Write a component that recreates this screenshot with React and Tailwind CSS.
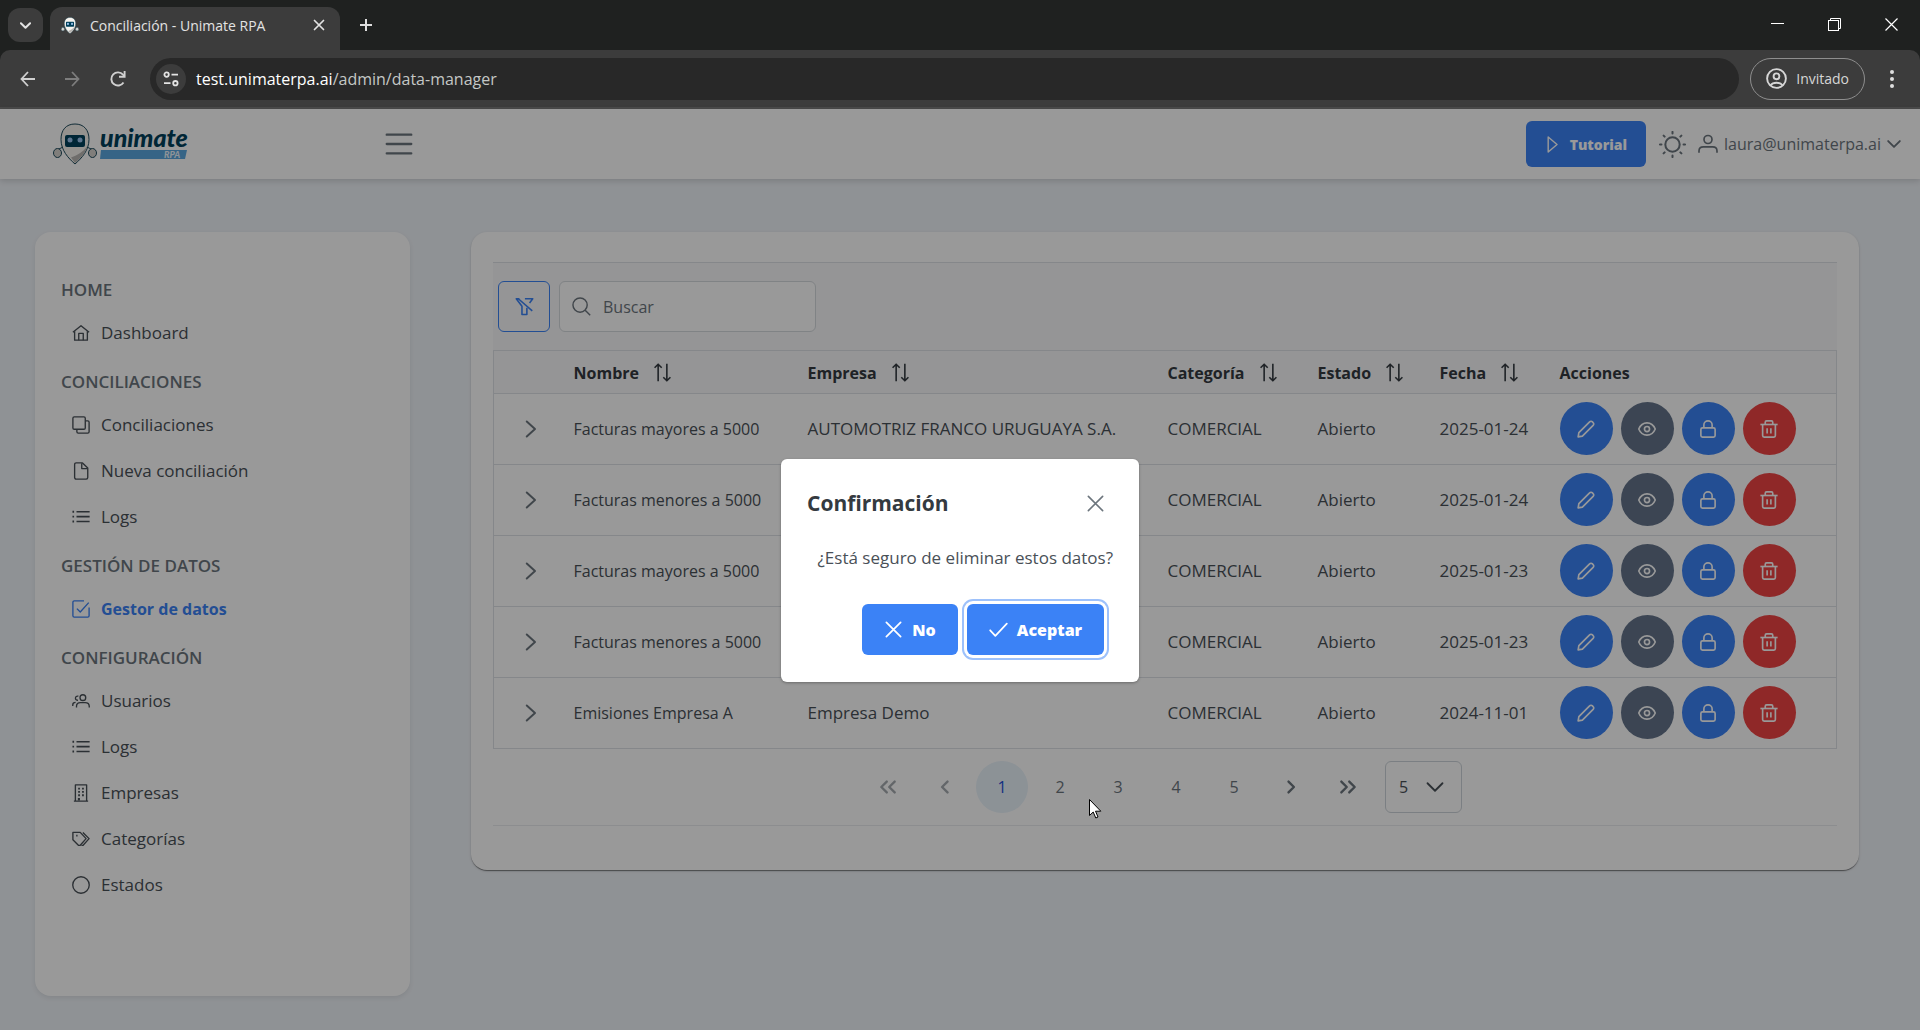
import React from "react";

const ICONS = {
  home: (
    <>
      <path d="M1.2 11 12 2.2 22.8 11" />
      <path d="M3.5 9.5V21.5H20.5V9.5" />
      <path d="M9 21.5V12.5H15V21.5" />
    </>
  ),
  clone: (
    <>
      <rect x="1.2" y="1.2" width="16.5" height="16.5" rx="1.8" />
      <path d="M18 6.5H21A1.8 1.8 0 0 1 22.8 8.3V21A1.8 1.8 0 0 1 21 22.8H8.3A1.8 1.8 0 0 1 6.5 21V18" />
    </>
  ),
  file: (
    <>
      <path d="M5.5 1.2H14L21 8V20.8A2 2 0 0 1 19 22.8H5.5A2 2 0 0 1 3.5 20.8V3.2A2 2 0 0 1 5.5 1.2Z" />
      <path d="M13 1.5V8.8H20.5" />
    </>
  ),
  list: (
    <>
      <path d="M6 5H23.5M6 11.5H23.5M6 18H23.5" strokeWidth="2.3" />
      <path d="M.6 5H2.8M.6 11.5H2.8M.6 18H2.8" strokeWidth="2.6" />
    </>
  ),
  check: (
    <>
      <path d="M16 1.2H3A1.8 1.8 0 0 0 1.2 3V21A1.8 1.8 0 0 0 3 22.8H21A1.8 1.8 0 0 0 22.8 21V10" />
      <path d="M6.5 11.5 11 16 22.3 3.5" />
    </>
  ),
  users: (
    <>
      <circle cx="14.5" cy="7.5" r="3.8" />
      <path d="M6 20.5V19C6 16 8 14.2 11 14.2H17.5C20.8 14.2 23 16 23 19V20.5" />
      <path d="M8.5 5.6C6.2 5 4.6 6.4 4.6 8.2S6 11.2 8 11" />
      <path d="M1 18.5V17.2C1 15 2.4 13.8 4.8 13.8" />
    </>
  ),
  building: (
    <>
      <path d="M4.5 22.8V1.2H19.5V22.8M2.5 22.8H21.5" />
      <path
        d="M8.2 6.2H10.6M13.4 6.2H15.8M8.2 10.6H10.6M13.4 10.6H15.8M8.2 15H10.6M13.4 15H15.8"
        strokeWidth="2.4"
      />
      <path d="M9.2 22V18.6" strokeWidth="2.8" />
    </>
  ),
  tags: (
    <>
      <path d="M1.2 3.2H11L18.8 11.5 11 20.4H8.5L1.2 13Z" />
      <path d="M14.5 3.2 22.8 11.5 14.8 20.4H12.5" />
      <path d="M5.6 7.6H7.4" strokeWidth="2.4" />
    </>
  ),
  circle: <circle cx="12" cy="12" r="11" />,
  search: (
    <>
      <circle cx="10.2" cy="10.2" r="9" />
      <path d="M16.6 16.6 23 23" />
    </>
  ),
  filterSlash: (
    <>
      <path d="M5.5 2.2H1.6L8.8 11.8V22H15V13.5" />
      <path d="M12.5 2.2H22.4L18.4 7.5" />
      <path d="M4.2 2.2 21.8 17.5" />
    </>
  ),
  sort: (
    <>
      <path d="M6.5 23V1.5M2 6 6.500 1.500 11 6" />
      <path d="M17.500 1V22.500M13 18 17.500 22.500 22 18" />
    </>
  ),
  pencil: (
    <path d="M1.5 22.500 2.500 16.800 16.800 2.500A2.600 2.600 0 0 1 20.600 2.500L21.500 3.400A2.600 2.600 0 0 1 21.500 7.200L7.200 21.500Z" />
  ),
  eye: (
    <>
      <path d="M1 12C5.500 1 18.500 1 23 12 18.500 23 5.500 23 1 12Z" />
      <circle cx="12" cy="12" r="3.400" />
    </>
  ),
  lock: (
    <>
      <rect x="2.500" y="10.500" width="19" height="12.300" rx="2.200" />
      <path d="M6.500 10.500V6.500A5.500 5.300 0 0 1 17.500 6.500V10.500" />
    </>
  ),
  trash: (
    <>
      <path d="M.5 6H23.500" />
      <path d="M7 5.500V3A1.800 1.800 0 0 1 8.800 1.200H15.200A1.800 1.800 0 0 1 17 3V5.500" />
      <path d="M3.500 6V20.800A2 2 0 0 0 5.500 22.800H18.500A2 2 0 0 0 20.500 20.800V6" />
      <path d="M9.500 11V18M14.500 11V18" />
    </>
  ),
  bars: <path d="M1.5 4H22.5M1.5 12H22.5M1.5 20H22.5" strokeLinecap="round" />,
  sun: (
    <>
      <circle cx="12" cy="12" r="6.4" />
      <path
        d="M12 .8V2.2M12 21.8V23.2M.8 12H2.2M21.8 12H23.2M4.1 4.1 5 5M19 19 19.9 19.9M4.1 19.9 5 19M19 5 19.9 4.1"
        strokeLinecap="round"
      />
    </>
  ),
  user: (
    <>
      <circle cx="12" cy="6.6" r="4.8" />
      <path d="M1.2 22.500V20.500C1.2 17.500 3.4 15.500 6.4 15.500H17.6C20.6 15.500 22.8 17.500 22.8 20.500V22.500" />
    </>
  ),
  play: <path d="M4.5 1.5V22.5L17 12Z" />,
  times: <path d="M3 3 21 21M21 3 3 21" strokeLinecap="round" />,
  tick: <path d="M1.5 13 8 20 22.5 4.5" strokeLinecap="round" />,
  right: <path d="M5 2 16 12 5 22" strokeLinecap="round" />,
  down: <path d="M2 7 12 17 22 7" strokeLinecap="round" />,
  angleLeft: <path d="M15 5.500 8.500 12 15 18.500" strokeLinecap="round" />,
  angleRight: <path d="M9 5.500 15.500 12 9 18.500" strokeLinecap="round" />,
  anglesLeft: <path d="M10.500 5.500 4 12 10.500 18.500M20 5.500 13.500 12 20 18.500" strokeLinecap="round" />,
  anglesRight: <path d="M4 5.500 10.500 12 4 18.500M13.500 5.500 20 12 13.500 18.500" strokeLinecap="round" />,
};

function Icon({ name, size = 18, stroke = 1.8, className = "" }) {
  return (
    <svg
      width={size}
      height={size}
      viewBox="0 0 24 24"
      fill="none"
      stroke="currentColor"
      strokeWidth={stroke}
      strokeLinejoin="round"
      aria-hidden="true"
      className={`shrink-0 ${className}`}
    >
      {ICONS[name]}
    </svg>
  );
}

const MENU = [
  { title: "HOME", items: [["home", "Dashboard"]] },
  {
    title: "CONCILIACIONES",
    items: [
      ["clone", "Conciliaciones"],
      ["file", "Nueva conciliación"],
      ["list", "Logs"],
    ],
  },
  { title: "GESTIÓN DE DATOS", items: [["check", "Gestor de datos"]] },
  {
    title: "CONFIGURACIÓN",
    items: [
      ["users", "Usuarios"],
      ["list", "Logs"],
      ["building", "Empresas"],
      ["tags", "Categorías"],
      ["circle", "Estados"],
    ],
  },
];

const ROWS = [
  ["Facturas mayores a 5000", "AUTOMOTRIZ FRANCO URUGUAYA S.A.", "2025-01-24"],
  ["Facturas menores a 5000", "", "2025-01-24"],
  ["Facturas mayores a 5000", "", "2025-01-23"],
  ["Facturas menores a 5000", "", "2025-01-23"],
  ["Emisiones Empresa A", "Empresa Demo", "2024-11-01"],
];

const ACTIONS = [
  ["pencil", "Editar", "bg-[#3b82f6]"],
  ["eye", "Ver", "bg-[#64748b]"],
  ["lock", "Bloquear", "bg-[#3b82f6]"],
  ["trash", "Eliminar", "bg-[#ef4444]"],
];

function Robot({ className }) {
  return (
    <svg viewBox="0 0 44 42" className={className} aria-hidden="true">
      <g stroke="#1d4a5c" strokeWidth="1">
        <path
          d="M22 1C13 1 8 7 8 16.5C8 27 15 35 22 41C29 35 36 27 36 16.5C36 7 31 1 22 1Z"
          fill="#f7f4ef"
        />
        <ellipse cx="4.5" cy="30" rx="4" ry="4.5" fill="#d5d2ce" />
        <ellipse cx="39.5" cy="30" rx="4" ry="4.5" fill="#d5d2ce" />
        <path d="M6 26 10 24M38 26 34 24" />
      </g>
      <path d="M34.5 23C30 29 25 32 18 34.5L22 40C28 35 33 29 34.5 23Z" fill="#b9b6b3" />
      <rect x="12" y="12" width="20" height="12" rx="2" fill="#00405a" />
      <circle cx="17" cy="17" r="2.5" fill="#9cc4ee" />
      <circle cx="27" cy="17" r="2.5" fill="#9cc4ee" />
    </svg>
  );
}

function Logo() {
  return (
    <div className="flex w-[136px] items-center gap-[3px]">
      <Robot className="h-[42px] w-[44px] shrink-0" />
      <svg width="89" height="42" viewBox="0 0 89 42" className="shrink-0">
        <text
          x="0"
          y="24"
          fontFamily="Lato, sans-serif"
          fontSize="25"
          fontWeight="900"
          fontStyle="italic"
          fill="#00405a"
        >
          unimate
        </text>
        <path d="M1 27H87L85 36H0Z" fill="#5aa7e0" />
        <text
          x="64"
          y="35"
          fontFamily="Lato, sans-serif"
          fontSize="9"
          fontWeight="900"
          fontStyle="italic"
          fill="#eef6fc"
        >
          RPA
        </text>
      </svg>
    </div>
  );
}

function BrowserChrome() {
  return (
    <div className="shrink-0 bg-[#1f2120] text-[#e3e3e3]">
      <div className="flex h-[50px]">
        <button
          aria-label="Buscar pestañas"
          className="mt-2 ml-2 flex h-[34px] w-[35px] items-center justify-center rounded-xl bg-[#3c3c3c]"
        >
          <Icon name="down" size={11} stroke={4.4} />
        </button>
        <div className="ml-[7px] mt-[7px] flex h-[43px] w-[290px] items-center rounded-t-xl bg-[#3c3c3c] pl-[11px] pr-[15px] pb-[7px]">
          <Robot className="h-[17px] w-[18px]" />
          <span className="ml-[11px] flex-1 whitespace-nowrap text-[14px]">
            Conciliación - Unimate RPA
          </span>
          <button aria-label="Cerrar pestaña">
            <Icon name="times" size={12} stroke={3.4} />
          </button>
        </div>
        <button aria-label="Nueva pestaña" className="mb-[1px] ml-[19px]">
          <svg width="14" height="14" viewBox="0 0 14 14" stroke="#dedede" strokeWidth="2">
            <path d="M7 1V13M1 7H13" />
          </svg>
        </button>
        <div className="ml-auto flex items-center gap-[44px] pr-[22px] pb-[1px] text-white">
          <button aria-label="Minimizar">
            <svg width="13" height="13" viewBox="0 0 13 13" stroke="currentColor">
              <path d="M0 5.5H13" />
            </svg>
          </button>
          <button aria-label="Restaurar">
            <svg width="13" height="13" viewBox="0 0 13 13" fill="none" stroke="currentColor">
              <rect x=".5" y="2.5" width="10" height="10" />
              <path d="M2.5 2.5V.5H12.5V10.5H10.5" />
            </svg>
          </button>
          <button aria-label="Cerrar">
            <svg width="13" height="13" viewBox="0 0 13 13" stroke="currentColor" strokeWidth="1.2">
              <path d="M.5.5 12.5 12.5M12.5.5.5 12.5" />
            </svg>
          </button>
        </div>
      </div>
      <div className="flex h-[59px] items-center rounded-t-[10px] border-b-2 border-[#4a4a4a] bg-[#3c3c3c] pl-5 pr-[26px]">
        <button aria-label="Atrás">
          <svg width="15" height="16" viewBox="0 0 15 16" fill="none" stroke="#d0d0d0" strokeWidth="1.8">
            <path d="M15 8H1.5M8 1 1.5 8 8 15" />
          </svg>
        </button>
        <button aria-label="Adelante" className="ml-[30px]">
          <svg width="15" height="16" viewBox="0 0 15 16" fill="none" stroke="#7d7d7d" strokeWidth="1.8">
            <path d="M0 8H13.5M7 1 13.5 8 7 15" />
          </svg>
        </button>
        <button aria-label="Recargar" className="ml-[30px]">
          <svg width="16" height="16" viewBox="0 0 16 16" fill="none" stroke="#d0d0d0" strokeWidth="1.9">
            <path d="M13.5 11.5A6.6 6.6 0 1 1 13 3.7L14.5 5.4" />
            <path d="M14.6 0V5.7H9" />
          </svg>
        </button>
        <div className="ml-6 flex h-[42px] flex-1 items-center rounded-full bg-[#282828] pl-[6px]">
          <button
            aria-label="Información del sitio"
            className="flex h-[30px] w-[30px] items-center justify-center rounded-full bg-[#3c3c3c]"
          >
            <svg width="16" height="16" viewBox="0 0 16 16" fill="none" stroke="#e3e3e3" strokeWidth="1.8">
              <circle cx="3.6" cy="3.6" r="2.2" />
              <path d="M8.5 3.6H15M1 12.2H7.5" />
              <circle cx="12.4" cy="12.2" r="2.2" />
            </svg>
          </button>
          <div className="ml-[10px] text-[16px] text-[#c4c7c5]">
            <span className="text-white">test.unimaterpa.ai</span>/admin/data-manager
          </div>
        </div>
        <button className="ml-[11px] flex h-[42px] items-center gap-[9px] rounded-full border border-[#8e8e8e] px-[15px] text-[14px] text-[#d6d6d6]">
          <svg width="21" height="21" viewBox="0 0 21 21" fill="none" stroke="currentColor" strokeWidth="1.9">
            <circle cx="10.5" cy="10.5" r="9.4" />
            <circle cx="10.5" cy="8.3" r="2.9" />
            <path d="M4.5 17.3C7 13.8 14 13.8 16.5 17.3" />
          </svg>
          Invitado
        </button>
        <button aria-label="Menú" className="ml-[25px]">
          <svg width="4" height="18" viewBox="0 0 4 18" fill="#dedede">
            <circle cx="2" cy="2" r="2" />
            <circle cx="2" cy="9" r="2" />
            <circle cx="2" cy="16" r="2" />
          </svg>
        </button>
      </div>
    </div>
  );
}

function Topbar() {
  return (
    <header className="flex h-[70px] items-center bg-white pr-[19px] pl-[53px] text-[#6c757d] shadow-[0_2px_6px_rgba(0,0,0,0.15)]">
      <a href="#inicio" aria-label="Unimate RPA">
        <Logo />
      </a>
      <button aria-label="Alternar menú" className="ml-[196px]">
        <Icon name="bars" size={28} stroke={2} />
      </button>
      <button className="ml-auto flex h-[46px] items-center gap-[8px] rounded-md bg-[#3b82f6] px-[19px] text-[14px] font-extrabold text-white">
        <Icon name="play" size={17} stroke={2} />
        Tutorial
      </button>
      <button aria-label="Cambiar tema" className="ml-[13px]">
        <Icon name="sun" size={27} stroke={1.8} />
      </button>
      <button className="ml-[12px] flex items-center gap-[6px] text-[16px]">
        <Icon name="user" size={20} stroke={2} />
        laura@unimaterpa.ai
        <Icon name="down" size={14} stroke={3.2} />
      </button>
    </header>
  );
}

function Sidebar() {
  return (
    <nav className="w-[375px] shrink-0 rounded-2xl bg-white px-[26px] pt-[32px] text-[17px] text-[#495057] shadow-[0_2px_5px_rgba(0,0,0,0.08)]">
      {MENU.map((group) => (
        <div key={group.title}>
          <div className="flex h-[46px] items-center pt-[5px] font-semibold text-[#6c757d]">
            {group.title}
          </div>
          <ul>
            {group.items.map(([icon, label]) => (
              <li key={label}>
                <a
                  href="#menu"
                  className={`flex h-[46px] items-center gap-[11px] pl-[11px] ${
                    label === "Gestor de datos" ? "text-[16px] font-bold text-[#3b82f6]" : ""
                  }`}
                >
                  <Icon name={icon} size={18} />
                  {label}
                </a>
              </li>
            ))}
          </ul>
        </div>
      ))}
    </nav>
  );
}

function SortHeader({ label }) {
  return (
    <th className="px-[17px] pt-[2px]">
      <button className="flex items-center gap-[14px]">
        {label}
        <Icon name="sort" size={19} stroke={2} />
      </button>
    </th>
  );
}

function PageButton({ label, icon, muted }) {
  return (
    <button
      aria-label={label}
      className={`flex h-[52px] w-[52px] items-center justify-center rounded-full ${muted ? "opacity-60" : ""}`}
    >
      <Icon name={icon} size={20} stroke={2.8} />
    </button>
  );
}

function Paginator() {
  return (
    <div className="flex h-[76px] items-center justify-center gap-[11px] pr-[6px] text-[16px] text-[#6c757d]">
      <div className="flex gap-[5px]">
        <PageButton label="Primera" icon="anglesLeft" muted />
        <PageButton label="Anterior" icon="angleLeft" muted />
        <div className="flex gap-[6px]">
          {[1, 2, 3, 4, 5].map((n) => (
            <button
              key={n}
              className={`h-[52px] w-[52px] rounded-full ${n === 1 ? "bg-[#e9f3fb] text-[#1d4ed8]" : ""}`}
            >
              {n}
            </button>
          ))}
        </div>
        <PageButton label="Siguiente" icon="angleRight" />
        <PageButton label="Última" icon="anglesRight" />
      </div>
      <div className="grid h-[52px] w-[77px] items-center rounded-md border border-[#ced4da] text-[#495057]">
        <select
          aria-label="Filas por página"
          defaultValue="5"
          className="col-start-1 row-start-1 h-full w-full appearance-none pl-[13px] outline-none"
        >
          <option>5</option>
          <option>10</option>
          <option>20</option>
        </select>
        <Icon
          name="down"
          size={18}
          stroke={2.4}
          className="pointer-events-none col-start-1 row-start-1 mr-[17px] justify-self-end"
        />
      </div>
    </div>
  );
}

function DataTable() {
  return (
    <section className="min-w-0 flex-1 self-start rounded-2xl bg-white px-[22px] pt-[30px] pb-[44px] text-[17px] text-[#495057] shadow-[0_2px_1px_-1px_rgba(0,0,0,0.3),0_1px_1px_rgba(0,0,0,0.2),0_1px_3px_rgba(0,0,0,0.12)]">
      <div className="flex items-center gap-[9px] border-y border-[#dee2e6] bg-[#f8f9fa] px-[5px] py-[18px]">
        <button
          aria-label="Limpiar filtros"
          className="flex h-[51px] w-[52px] items-center justify-center rounded-md border border-[#3b82f6] text-[#3b82f6]"
        >
          <Icon name="filterSlash" size={19} stroke={2} />
        </button>
        <label className="flex h-[51px] w-[257px] items-center gap-[12px] rounded-md border border-[#d5dade] bg-white pl-[12px] text-[16px] text-[#6c757d]">
          <Icon name="search" size={19} />
          <input
            type="text"
            aria-label="Buscar"
            placeholder="Buscar"
            className="min-w-0 flex-1 outline-none placeholder:text-[#6c757d]"
          />
        </label>
      </div>
      <table className="w-full table-fixed border-x border-b border-[#dee2e6]">
        <colgroup>
          <col className="w-[63px]" />
          <col className="w-[234px]" />
          <col />
          <col className="w-[150px]" />
          <col className="w-[122px]" />
          <col className="w-[120px]" />
          <col className="w-[294px]" />
        </colgroup>
        <thead className="bg-[#f8f9fa] text-left text-[16px] text-[#343a40]">
          <tr className="h-[42px] border-b border-[#dee2e6]">
            <th aria-label="Expandir" />
            <SortHeader label="Nombre" />
            <SortHeader label="Empresa" />
            <SortHeader label="Categoría" />
            <SortHeader label="Estado" />
            <SortHeader label="Fecha" />
            <th className="px-[17px] pt-[2px]">Acciones</th>
          </tr>
        </thead>
        <tbody>
          {ROWS.map(([name, company, date], idx) => (
            <tr key={idx} className="h-[71px] border-b border-[#dee2e6] whitespace-nowrap">
              <td className="pl-[29px]">
                <button aria-label="Ver detalle" className="block text-[#6c757d]">
                  <Icon name="right" size={18} stroke={2.6} />
                </button>
              </td>
              <td className="px-[17px] text-[16px]">{name}</td>
              <td className="px-[17px]">{company}</td>
              <td className="px-[17px]">COMERCIAL</td>
              <td className="px-[17px]">Abierto</td>
              <td className="px-[17px]">{date}</td>
              <td className="px-[17px]">
                <div className="flex gap-[8px]">
                  {ACTIONS.map(([icon, label, color]) => (
                    <button
                      key={icon}
                      aria-label={label}
                      className={`flex h-[53px] w-[53px] items-center justify-center rounded-full text-white ${color}`}
                    >
                      <Icon name={icon} size={18} stroke={2.2} />
                    </button>
                  ))}
                </div>
              </td>
            </tr>
          ))}
        </tbody>
      </table>
      <div className="border-b border-[#e9ecef]">
        <Paginator />
      </div>
    </section>
  );
}

function ConfirmDialog() {
  return (
    <div className="absolute inset-0 flex items-center justify-center bg-black/40 pt-[2px]">
      <div
        role="dialog"
        aria-modal="true"
        aria-labelledby="confirm-title"
        className="w-[358px] rounded-md bg-white px-[26px] pt-[26px] pb-[27px] shadow-[0_1px_3px_rgba(0,0,0,0.3)]"
      >
        <div className="flex h-[36px] items-center justify-between pr-[8px]">
          <h2 id="confirm-title" className="pt-[2px] text-[21px] font-bold text-[#343a40]">
            Confirmación
          </h2>
          <button aria-label="Cerrar" className="text-[#6c757d]">
            <Icon name="times" size={19} stroke={2} />
          </button>
        </div>
        <p className="mt-[24px] text-right text-[17px] leading-[26px] whitespace-nowrap text-[#495057]">
          ¿Está seguro de eliminar estos datos?
        </p>
        <div className="mt-[33px] flex justify-end gap-[9px] pr-[9px] text-[16px] font-extrabold text-white">
          <button className="flex h-[51px] w-[96px] items-center justify-center gap-[9px] rounded-md bg-[#3b82f6]">
            <Icon name="times" size={19} stroke={2.2} />
            No
          </button>
          <button className="flex h-[51px] w-[137px] items-center justify-center gap-[9px] rounded-md bg-[#3b82f6] shadow-[0_0_0_3px_#ffffff,0_0_0_5px_#9dc1fb]">
            <Icon name="tick" size={19} stroke={2.2} />
            Aceptar
          </button>
        </div>
      </div>
    </div>
  );
}

export default function App() {
  return (
    <div className="flex min-h-screen flex-col font-['Open_Sans','Noto_Sans',sans-serif]">
      <BrowserChrome />
      <div className="relative flex flex-1 flex-col bg-[#eff3f8]">
        <Topbar />
        <main className="flex flex-1 gap-[61px] pt-[53px] pr-[61px] pb-[34px] pl-[35px]">
          <Sidebar />
          <DataTable />
        </main>
        <ConfirmDialog />
        <svg
          width="13"
          height="20"
          viewBox="0 0 13 20"
          fill="#fff"
          stroke="#000"
          className="absolute top-[690px] left-[1089px]"
          aria-hidden="true"
        >
          <path d="M.5.5V16.5L4.2 13 6.8 19 9 18 6.500 12.200H11.800Z" />
        </svg>
      </div>
    </div>
  );
}
